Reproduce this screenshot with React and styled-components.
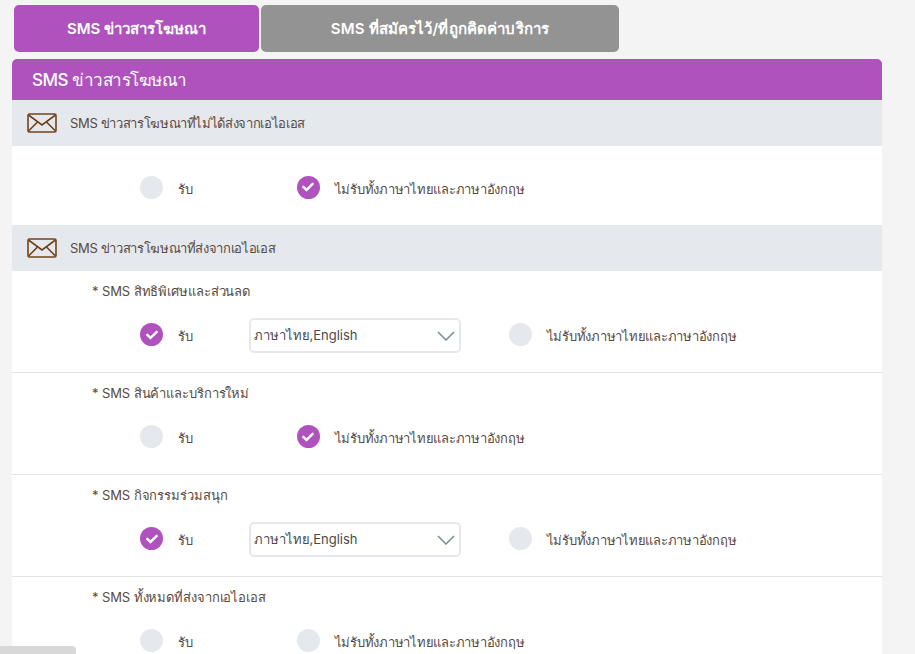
import React from "react";
import styled, { createGlobalStyle } from "styled-components";
import { FaCheck } from "react-icons/fa";

const PURPLE = "#af52be";
const GREY_BLUE = "#e5e8ed";

const GlobalStyle = createGlobalStyle`
  html, body {
    margin: 0;
    height: 654px;
    overflow: hidden;
    background: #f4f4f4;
    color: #5a4a42;
    font-family: "Inter", "Noto Sans", "Liberation Sans", sans-serif;
  }
`;

const Page = styled.div`
  width: 870px;
  padding: 5px 0 0 12px;
`;
const Tabs = styled.div`
  display: flex;
  gap: 2px;
  padding-left: 2px;
  margin-bottom: 7px;
`;
const Tab = styled.div`
  width: ${props => props.$width}px;
  height: 47px;
  display: flex;
  align-items: center;
  justify-content: center;
  border-radius: 5px;
  background: ${props => (props.$active ? PURPLE : "#939393")};
  color: #fff;
  font-size: 15px;
  font-weight: 600;
  letter-spacing: ${props => (props.$active ? 0 : 0.15)}px;
`;
const Panel = styled.div`
  background: #fff;
`;
const PanelTitle = styled.div`
  height: 41px;
  display: flex;
  align-items: center;
  padding-left: 20px;
  border-radius: 5px 5px 0 0;
  background: ${PURPLE};
  color: #fff;
  font-size: 17px;
  font-weight: 500;
  letter-spacing: -0.5px;
`;
const GroupHeader = styled.div`
  height: 46px;
  display: flex;
  align-items: center;
  gap: 13px;
  padding-left: 15px;
  background: ${GREY_BLUE};
  font-size: 13px;
  letter-spacing: -0.35px;
`;
const PlainRow = styled.div`
  height: 79px;
  display: flex;
  align-items: center;
  padding-top: 3px;
  box-sizing: border-box;
`;
const Section = styled.div`
  height: 102px;
  box-sizing: border-box;
  border-bottom: 1px solid #e4e4e4;
  &:last-child {
    border-bottom: none;
  }
`;
const SectionTitle = styled.div`
  height: 40px;
  padding: 10px 0 0 80px;
  box-sizing: border-box;
  font-size: 13px;
  line-height: 20px;
  letter-spacing: -0.1px;
`;
const OptionRow = styled.div`
  height: 47px;
  display: flex;
  align-items: center;
`;
const Option = styled.div`
  display: flex;
  align-items: center;
  gap: 15px;
  font-size: 13px;
  letter-spacing: -0.25px;
  margin-left: ${props => props.$left}px;
`;
const Label = styled.span`
  padding-top: 4px;
`;
const Radio = styled.span`
  width: 23px;
  height: 23px;
  border-radius: 50%;
  display: flex;
  align-items: center;
  justify-content: center;
  background: ${props => (props.$checked ? PURPLE : GREY_BLUE)};
  color: #fff;
  font-size: 12px;
`;
const Select = styled.div`
  width: 212px;
  height: 35px;
  box-sizing: border-box;
  margin: 2px 0 0 56px;
  display: flex;
  align-items: center;
  justify-content: space-between;
  padding: 0 4px 0 3px;
  border: 2px solid ${GREY_BLUE};
  border-radius: 5px;
  background: #fff;
  font-size: 13px;
  color: #4a4a4a;
`;
const Corner = styled.div`
  position: fixed;
  left: 0;
  bottom: 0;
  width: 76px;
  height: 8px;
  border-radius: 0 4px 0 0;
  background: #d8d8d8;
`;

const Envelope = () => (
  <svg width="30" height="20" viewBox="0 0 30 20" fill="none" stroke="#70431c" strokeWidth="1.6">
    <rect x="1" y="1" width="28" height="18" rx="1.5" />
    <path d="M1.5 2 L15 12 L28.5 2" />
    <path d="M1.5 18 L10.5 9 M28.5 18 L19.5 9" />
  </svg>
);

const Chevron = () => (
  <svg width="18" height="10" viewBox="0 0 18 10" fill="none" stroke="#7f8d99" strokeWidth="1.6">
    <path d="M1 1 L9 9 L17 1" />
  </svg>
);

const Choice = ({ checked, left, children }) => (
  <Option $left={left}>
    <Radio $checked={checked}>{checked && <FaCheck />}</Radio>
    <Label>{children}</Label>
  </Option>
);

const REJECTED = "ไม่รับทั้งภาษาไทยและภาษาอังกฤษ";

const sections = [
  { title: "* SMS สิทธิพิเศษและส่วนลด", accepted: true },
  { title: "* SMS สินค้าและบริการใหม่", refused: true },
  { title: "* SMS กิจกรรมร่วมสนุก", accepted: true },
  { title: "* SMS ทั้งหมดที่ส่งจากเอไอเอส" },
];

export default function App() {
  return (
    <Page>
      <GlobalStyle />
      <Tabs>
        <Tab $active $width={245}>SMS ข่าวสารโฆษณา</Tab>
        <Tab $width={358}>SMS ที่สมัครไว้/ที่ถูกคิดค่าบริการ</Tab>
      </Tabs>
      <Panel>
        <PanelTitle>SMS ข่าวสารโฆษณา</PanelTitle>
        <GroupHeader>
          <Envelope />
          SMS ข่าวสารโฆษณาที่ไม่ได้ส่งจากเอไอเอส
        </GroupHeader>
        <PlainRow>
          <Choice left={128}>รับ</Choice>
          <Choice checked left={104}>{REJECTED}</Choice>
        </PlainRow>
        <GroupHeader>
          <Envelope />
          SMS ข่าวสารโฆษณาที่ส่งจากเอไอเอส
        </GroupHeader>
        {sections.map(section => (
          <Section key={section.title}>
            <SectionTitle>{section.title}</SectionTitle>
            <OptionRow>
              {section.accepted ? (
                <>
                  <Choice checked left={128}>รับ</Choice>
                  <Select>
                    ภาษาไทย,English
                    <Chevron />
                  </Select>
                  <Choice left={48}>{REJECTED}</Choice>
                </>
              ) : (
                <>
                  <Choice left={128}>รับ</Choice>
                  <Choice checked={section.refused} left={104}>{REJECTED}</Choice>
                </>
              )}
            </OptionRow>
          </Section>
        ))}
      </Panel>
      <Corner />
    </Page>
  );
}
